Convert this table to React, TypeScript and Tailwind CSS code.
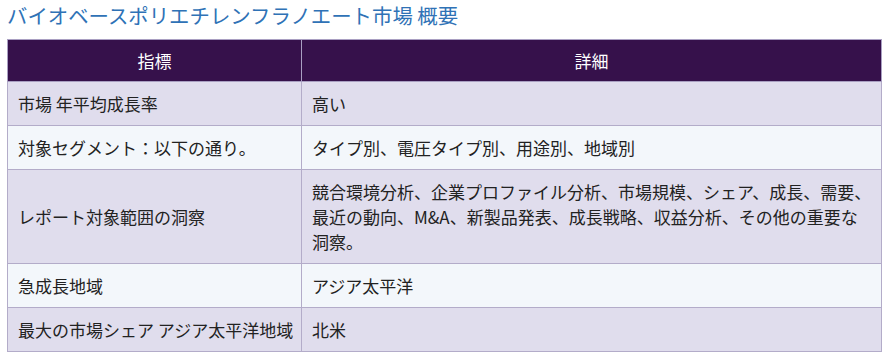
const rows: [string, string][] = [
  ['市場 年平均成長率', '高い'],
  ['対象セグメント：以下の通り。', 'タイプ別、電圧タイプ別、用途別、地域別'],
  [
    'レポート対象範囲の洞察',
    '競合環境分析、企業プロファイル分析、市場規模、シェア、成長、需要、最近の動向、M&A、新製品発表、成長戦略、収益分析、その他の重要な洞察。',
  ],
  ['急成長地域', 'アジア太平洋'],
  ['最大の市場シェア アジア太平洋地域', '北米'],
]

export default function App() {
  return (
    <div className="w-[888px] h-[363px] bg-white px-[7px] pt-px font-['Noto_Sans_CJK_JP','Noto_Sans',sans-serif]">
      <h2 className="text-[20.4px] leading-[28px] text-[#2f72b6] font-normal">バイオベースポリエチレンフラノエート市場 概要</h2>
      <table className="mt-[10px] w-[875px] border-collapse text-[17px] leading-[25px] text-[#222]">
        <thead>
          <tr className="bg-[#36114b] text-white h-[42px]">
            <th className="w-[294px] border border-[#a99fc2] font-normal text-center">指標</th>
            <th className="border border-[#a99fc2] font-normal text-center">詳細</th>
          </tr>
        </thead>
        <tbody>
          {rows.map(([k, v], i) => (
            <tr key={k} className={i % 2 === 0 ? 'bg-[#e0dded]' : 'bg-[#f3f7fb]'}>
              <td className="border border-[#b3acc9] pl-[10px] pr-[2px] py-[9px] align-middle whitespace-nowrap">{k}</td>
              <td className="border border-[#b3acc9] pl-[10px] pr-[8px] py-[9px] align-middle">{v}</td>
            </tr>
          ))}
        </tbody>
      </table>
    </div>
  )
}
